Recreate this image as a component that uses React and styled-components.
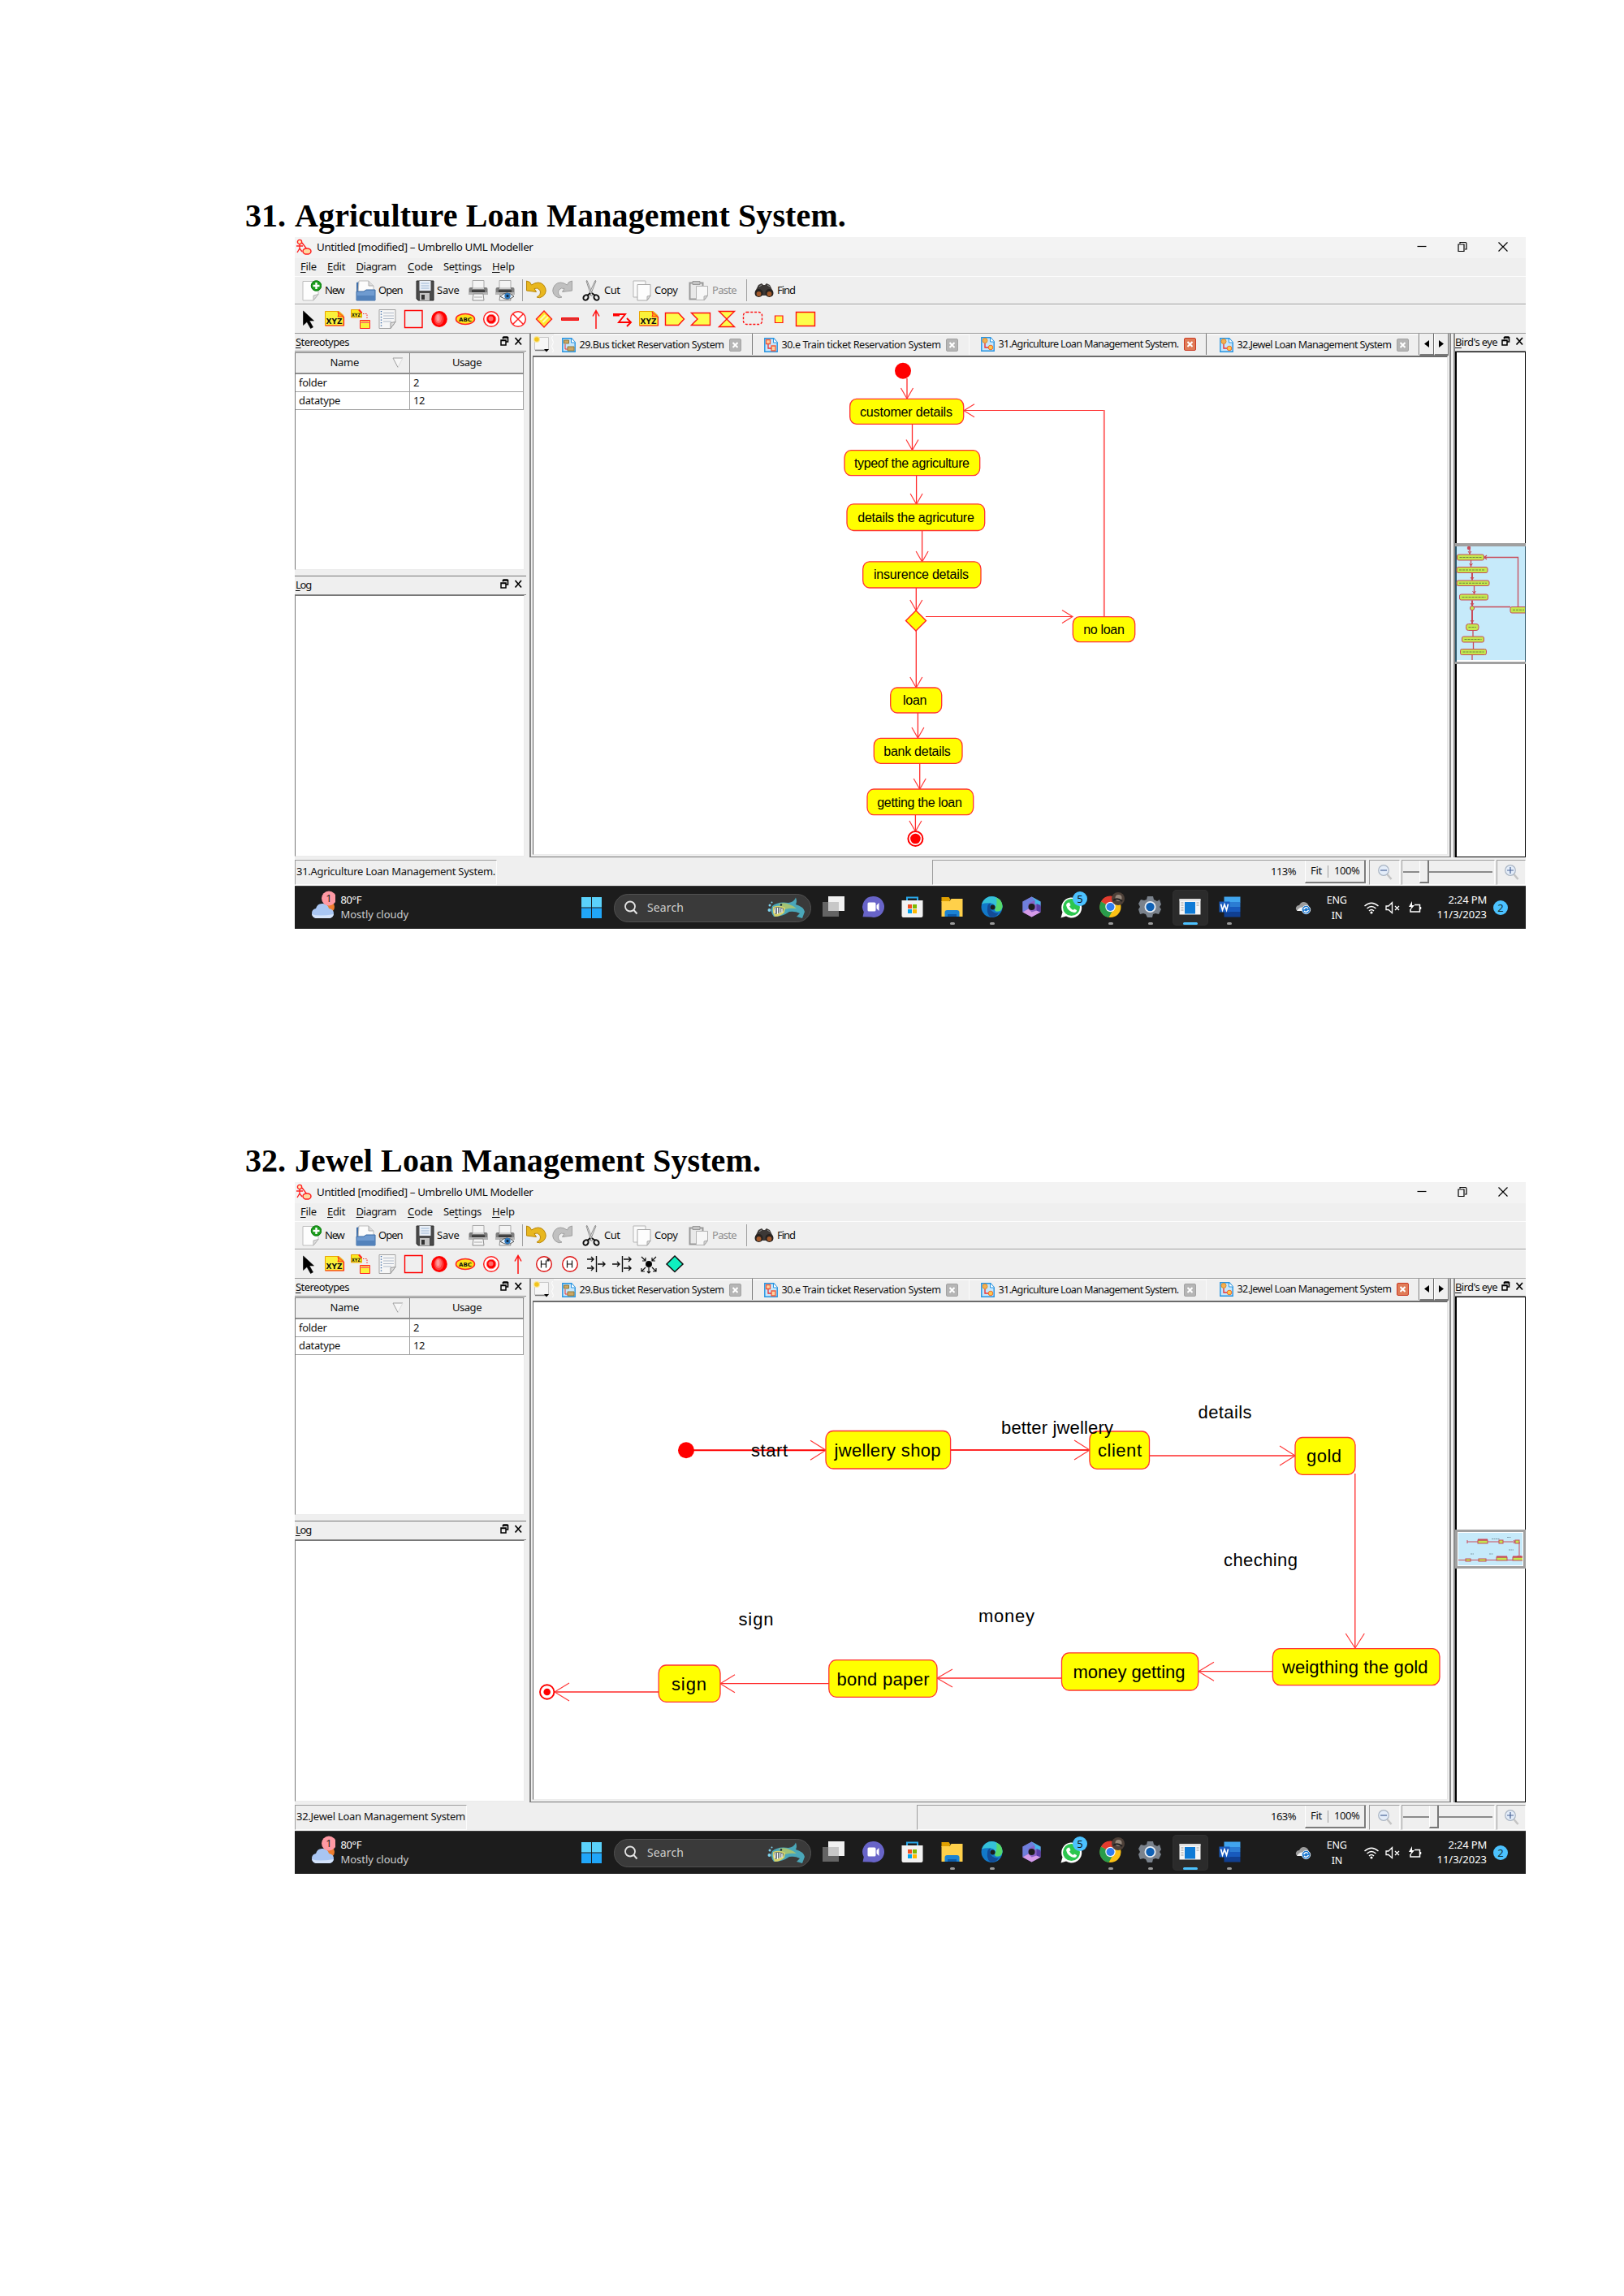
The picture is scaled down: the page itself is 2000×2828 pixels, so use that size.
import React, { useLayoutEffect, useRef, useState } from "react";
import styled, { createGlobalStyle, css } from "styled-components";

const UI = `"Noto Sans", "Open Sans", sans-serif`;
const RED = "#ff0000";

const GlobalStyle = createGlobalStyle`
  html, body { margin: 0; padding: 0; background: #fff; }
  * { box-sizing: border-box; }
  svg { display: block; }
`;

/* ---------- text that is spread or tightened to a given width ---------- */
const FitBox = styled.span`
  display: block;
  flex: none;
  width: ${(p) => p.$w}px;
  margin-left: ${(p) => p.$ml || 0}px;
  white-space: pre;
  font-size: ${(p) => p.$size || 13}px;
  line-height: 1.36;
  color: ${(p) => p.$color || "inherit"};
`;
const FitInner = styled.span`
  display: inline-block;
  u { text-decoration: underline; text-underline-offset: 2px; text-decoration-thickness: 1px; }
`;
function Fit({ w, ml, size, color, children }) {
  const ref = useRef(null);
  const [gap, setGap] = useState(0);
  useLayoutEffect(() => {
    const el = ref.current;
    const natural = el.getBoundingClientRect().width;
    setGap((w - natural) / el.textContent.length);
  }, [w]);
  return (
    <FitBox $w={w} $ml={ml} $size={size} $color={color}>
      <FitInner ref={ref} style={{ letterSpacing: `${gap}px` }}>{children}</FitInner>
    </FitBox>
  );
}

/* ---------- page ---------- */
const Page = styled.main`
  width: 2000px;
  height: 2828px;
  padding: 239px 0 0 302px;
  background: #fff;
  overflow: hidden;
`;
const Section = styled.section`
  height: 1164px;
`;
const Heading = styled.h1`
  margin: 0;
  height: 53px;
  display: flex;
  align-items: flex-start;
  font: bold 40px "Liberation Serif", "Times New Roman", serif;
  color: #000;
`;
const Window = styled.div`
  width: 1516px;
  height: 852px;
  margin-left: 61px;
  display: flex;
  flex-direction: column;
  background: #efefef;
  font-family: ${UI};
  color: #111;
`;
const Bar = styled.div`
  display: flex;
  align-items: center;
  flex: none;
  height: ${(p) => p.$h}px;
  padding-top: ${(p) => p.$pt || 0}px;
  padding-bottom: ${(p) => p.$pb || 0}px;
  background: ${(p) => p.$bg || "#efefef"};
  ${(p) => p.$line && css`border-bottom: 1px solid #9b9b9b; box-shadow: inset 0 1px #fcfcfc;`}
`;
const Slot = styled.span`
  display: flex;
  flex: none;
  justify-content: center;
  margin-left: ${(p) => p.$ml || 0}px;
  width: ${(p) => p.$w}px;
`;
const Separator = styled.span`
  flex: none;
  width: 1px;
  height: 27px;
  margin-left: ${(p) => p.$ml}px;
  background: #a0a0a0;
`;
const Spacer = styled.span`
  flex: 1;
`;
const Rule = styled.div`
  flex: none;
  height: 0;
  box-shadow: 0 -1px #9b9b9b;
`;

const Icon = ({ w, ml, h = 26, vb, children }) => (
  <Slot $w={w} $ml={ml}>
    <svg width={w} height={h} viewBox={vb || `0 0 ${w} ${h}`} fill="none">{children}</svg>
  </Slot>
);

/* ---------- title bar ---------- */
const TitleBar = () => (
  <Bar $h={26} $bg="#f3f3f3" $pb={2}>
    <Icon ml={2} w={19} h={20}>
      <circle cx="4" cy="4" r="2.6" stroke="#f22" strokeWidth="1.4" fill="#fff3c0" />
      <path d="M4 7v5M0 9h8M4 12l-3 5M4 12l3 4M7 5l6 8" stroke="#f22" strokeWidth="1.4" />
      <ellipse cx="13" cy="15.500" rx="5" ry="3.6" stroke="#f22" strokeWidth="1.5" fill="#ffd9a0" />
    </Icon>
    <Fit ml={6} w={266.5} size={13.4}>Untitled [modified] – Umbrello UML Modeller</Fit>
    <Spacer />
    <Icon w={12} h={14}><path d="M.5 6.500h11" stroke="#000" strokeWidth="1.2" /></Icon>
    <Icon ml={38} w={12} h={14}>
      <path d="M1 4h7v8.500H1zM3 3V1.500h6.500q1.500 0 1.500 1.500v7H9" stroke="#000" strokeWidth="1.2" />
    </Icon>
    <Icon ml={38} w={12} h={14}><path d="M.5 1.500l11 11M11.500 1.500l-11 11" stroke="#000" strokeWidth="1.2" /></Icon>
    <Slot $w={22} />
  </Bar>
);

const MenuBar = () => (
  <Bar $h={22}>
    <Fit ml={7} w={20}><u>F</u>ile</Fit>
    <Fit ml={13} w={22}><u>E</u>dit</Fit>
    <Fit ml={13.5} w={49.5}><u>D</u>iagram</Fit>
    <Fit ml={14} w={31}><u>C</u>ode</Fit>
    <Fit ml={13} w={47}>Se<u>t</u>tings</Fit>
    <Fit ml={13} w={28}><u>H</u>elp</Fit>
  </Bar>
);

/* ---------- main toolbar ---------- */
const Printer = () => (
  <g>
    <path d="M5 .5h14V10H5z" fill="#f4f4f4" stroke="#a9a9a9" />
    <path d="M.5 11q0-2 2-2H5v2h14V9h2.500q2 0 2 2v7H.5z" fill="#7d7d7d" />
    <path d="M.5 15h23v3H.5z" fill="#b4b4b4" />
    <path d="M4 12.500h16v2H4z" fill="#262626" />
    <path d="M6 17h12l1 8H5z" fill="#f6f6f6" stroke="#8f8f8f" />
    <path d="M7 21h10" stroke="#aaa" />
  </g>
);
const MainToolbar = () => (
  <Bar $h={35} $line $pt={1}>
    <Icon ml={9} w={24}>
      <path d="M1 1.500h19v16l-6 7.500H1z" fill="#fdfdfd" stroke="#bdbdbd" />
      <path d="M20 17.500l-6 7.500v-6z" fill="#ddd" stroke="#b5b5b5" />
      <circle cx="17.500" cy="7" r="6.300" fill="#1a9c1a" stroke="#0c7a10" />
      <path d="M17.500 3v8M13.500 7h8" stroke="#fff" strokeWidth="2.400" />
    </Icon>
    <Fit ml={4} w={23.5}>New</Fit>
    <Icon ml={14} w={25}>
      <path d="M1 3l4-1v14H1z" fill="#3d6da8" />
      <path d="M4 1h12l6 6v9H3z" fill="#fcfcfc" stroke="#bbb" />
      <path d="M16 1v6h6" fill="#ddd" stroke="#aaa" />
      <path d="M1 14h9l3-2h11v13H1z" fill="#6f9bd0" stroke="#396aa5" />
      <path d="M1 19h23v6H1z" fill="#5382bb" />
    </Icon>
    <Fit ml={3.5} w={29.5}>Open</Fit>
    <Icon ml={16} w={23}>
      <path d="M1 1h21v24H3l-2-2z" fill="#4a4a4a" stroke="#292929" />
      <path d="M4.500 1h14v12h-14z" fill="#eaf0f8" />
      <path d="M6.500 4h10M6.500 7h10M6.500 10h10" stroke="#9cb6d3" />
      <path d="M5 16h12v9H5z" fill="#c4c4c4" />
      <path d="M7 18h4v6H7z" fill="#333" />
    </Icon>
    <Fit ml={3.5} w={27.5}>Save</Fit>
    <Icon ml={11.5} w={24}><Printer /></Icon>
    <Icon ml={8.5} w={25}>
      <Printer />
      <path d="M6 20q8-8 17 0q-8 7-17 0z" fill="#e8f1fa" stroke="#555" />
      <circle cx="15" cy="19.500" r="3.700" fill="#2f78bd" /><circle cx="15" cy="19.500" r="1.500" fill="#123" />
    </Icon>
    <Separator $ml={8} />
    <Icon ml={4} w={25}>
      <path d="M.5 1l4 1.500 2 3.500q9-6 15 0q6 8-1 14q-4 3-7.500 1q6-3 4-8.500q-3-4-7-2l2.500 4L.5 13z" fill="#e8b71f" stroke="#b98507" />
    </Icon>
    <Icon ml={7} w={25}>
      <path d="M24.500 1l-4 1.500-2 3.500q-9-6-15 0q-6 8 1 14q4 3 7.500 1q-6-3-4-8.500q3-4 7-2l-2.500 4 12-1.500z" fill="#c0c0c0" stroke="#9f9f9f" />
    </Icon>
    <Icon ml={12.5} w={22}>
      <path d="M5 1l1-0.500 7 18-2 1zM17 1l-1-0.500L8 18l2 1z" fill="#f4f4f4" stroke="#8c8c8c" />
      <ellipse cx="4.500" cy="21.500" rx="2.800" ry="3.400" transform="rotate(35 4.500 21.500)" stroke="#111" strokeWidth="2" />
      <ellipse cx="17.500" cy="21.500" rx="2.800" ry="3.400" transform="rotate(-35 17.500 21.500)" stroke="#111" strokeWidth="2" />
      <path d="M6 19l4-3M16 19l-4-3" stroke="#111" strokeWidth="1.600" />
    </Icon>
    <Fit ml={5} w={19.5}>Cut</Fit>
    <Icon ml={15} w={23}>
      <path d="M1 1h15v20H1z" fill="#fafafa" stroke="#b5b5b5" />
      <path d="M6 5.500h16v14l-4 5.500H6z" fill="#fdfdfd" stroke="#a9a9a9" />
      <path d="M22 19l-4 6v-5z" fill="#ddd" stroke="#aaa" />
    </Icon>
    <Fit ml={4.5} w={28.5}>Copy</Fit>
    <Icon ml={13.5} w={24}>
      <path d="M1.500 3.500h16v20h-16z" fill="#e9e9e9" stroke="#999" strokeWidth="2" />
      <path d="M5 1.500h9v4H5z" fill="#c4c4c4" stroke="#999" />
      <path d="M9.500 7.500h14v12l-4 5h-10z" fill="#f7f7f7" stroke="#b3b3b3" />
      <path d="M23 19l-4 6v-5z" fill="#ddd" stroke="#aaa" />
    </Icon>
    <Fit ml={5} w={30} color="#8f8f8f">Paste</Fit>
    <Separator $ml={12} />
    <Icon ml={9} w={24}>
      <path d="M5 6l4-2 2 2h2l2-2 4 2 4 8v5H1v-5z" fill="#3c3836" />
      <circle cx="5.500" cy="16" r="5" fill="#262220" /><circle cx="18.500" cy="16" r="5" fill="#262220" />
      <circle cx="5.500" cy="17" r="2.900" fill="#a35a2c" /><circle cx="18.500" cy="17" r="2.900" fill="#a35a2c" />
      <path d="M6 8l3-2M16 6l3 2" stroke="#999" />
    </Icon>
    <Fit ml={4} w={22}>Find</Fit>
  </Bar>
);

/* ---------- diagram tools ---------- */
const ToolSlot = styled.span`
  flex: none;
  width: 32.2px;
  display: flex;
  justify-content: center;
`;
const ToolRow = styled.div`
  display: flex;
  margin-left: 1px;
`;
const svgText = { fontFamily: '"DejaVu Sans", sans-serif', fontWeight: "bold", fill: "#111" };
const Xyz = () => (
  <g>
    <path d="M1.500 3.500h17l5.500 5v12.500H1.500z" fill="#fbf13a" stroke="#e9a300" />
    <path d="M1.500 21h23V10" stroke="#f22" strokeWidth="1.200" />
    <path d="M17 4l7 6h-7q2-3 0-6z" fill="#ffb000" stroke="#f22" />
    <text x="2.500" y="18.500" fontSize="9" textLength="20" lengthAdjust="spacingAndGlyphs" {...svgText}>XYZ</text>
  </g>
);
const tools = {
  select: <path d="M6.500 3v17.500l4.500-4 4.500 8 3-1.500-4.500-8h5.500z" fill="#000" stroke="#000" strokeWidth=".6" />,
  xyz: <Xyz />,
  anchor: (
    <g>
      <path d="M1.500 1.500h10l3 3v6.500h-13z" fill="#fbe81e" stroke="#e9a300" />
      <path d="M11 1.500l3.500 4" stroke="#f22" strokeWidth="2" />
      <text x="2" y="9.500" fontSize="6" textLength="11" lengthAdjust="spacingAndGlyphs" {...svgText}>XYZ</text>
      <path d="M16 6.500h5v7" stroke="#f22" strokeDasharray="1.500 1.500" />
      <path d="M12.500 14.500h12v10h-12z" fill="#fbf13a" stroke="#f22" />
      <path d="M12.500 17.500h12M14 16h9" stroke="#f66" />
    </g>
  ),
  note: (
    <g>
      <path d="M3 1.500h20v15l-6 8H3z" fill="#f6f6f6" stroke="#a2a2a2" />
      <path d="M8 5.500h13M8 9h13M8 12.500h13M8 16h10" stroke="#b0bac8" />
      <path d="M5.500 3v20" stroke="#3465a4" strokeWidth="1.400" strokeDasharray="1.300 2.200" />
      <path d="M23 16.500l-6 8v-7z" fill="#ddd" stroke="#999" />
    </g>
  ),
  rect: <path d="M2.500 2.500h21.500v21H2.500z" stroke={RED} strokeWidth="1.400" />,
  initial: (
    <g>
      <ellipse cx="13" cy="13" rx="9.800" ry="10" fill="#f00" />
      <ellipse cx="12.500" cy="13" rx="6" ry="7.500" fill="#ff3a3a" />
      <ellipse cx="12" cy="12" rx="4" ry="6" fill="#ff6e6e" />
      <ellipse cx="11.500" cy="11.500" rx="2" ry="4" fill="#ff9a9a" />
    </g>
  ),
  abc: (
    <g>
      <ellipse cx="13" cy="13" rx="11.500" ry="6.500" fill="#ffe11a" stroke="#f22" strokeWidth="1.500" />
      <text x="5" y="15.500" fontSize="6.500" textLength="16" lengthAdjust="spacingAndGlyphs" {...svgText}>ABC</text>
    </g>
  ),
  final: (
    <g>
      <circle cx="13" cy="13" r="9.300" stroke="#f22" strokeWidth="1.500" fill="#fff" />
      <circle cx="13" cy="13" r="5.800" fill="#f00" stroke="#f77" /><circle cx="12.500" cy="12.500" r="3" fill="#ff6a6a" />
    </g>
  ),
  cross: (
    <g stroke="#f22" strokeWidth="1.500">
      <circle cx="13" cy="13" r="9.300" fill="#fff" /><path d="M6.500 6.500l13 13M19.500 6.500l-13 13" />
    </g>
  ),
  decision: (
    <g>
      <path d="M13 3l9.500 10L13 23 3.500 13z" fill="#ffe92e" stroke="#f22" strokeWidth="1.500" />
      <path d="M8.500 14l6-6M11.500 17l6.500-6.500" stroke="#fff9b0" strokeWidth="2.200" />
    </g>
  ),
  bar: <path d="M2.500 11.500h21v3h-21z" fill="#d33" stroke="#f00" />,
  up: <path d="M13 25V3M9 9.500L13 2.500l4 7" stroke="#f11" strokeWidth="1.500" />,
  zigzag: <path d="M2 7h15L9 17h15M19 12l5 5-5 5M2 8.500h8" stroke={RED} strokeWidth="1.900" />,
  pentagon: <path d="M1.500 5.500h16L24.500 13l-7 7.500h-16z" fill="#fdfd4a" stroke="#f11" strokeWidth="1.400" />,
  receive: <path d="M1.500 5.500h23v15h-23L9 13z" fill="#fdfd4a" stroke="#f11" strokeWidth="1.400" />,
  hourglass: <path d="M3.500 3.500h19L3.500 22.500h19z" fill="#fdfd4a" stroke="#f11" strokeWidth="1.400" />,
  region: <rect x="1.500" y="4.500" width="23" height="15" rx="4" stroke="#f11" strokeWidth="1.400" strokeDasharray="3 1.800" />,
  pin: <path d="M8.500 9h9.500v8.500H8.500z" fill="#fdfd4a" stroke="#f11" strokeWidth="1.200" />,
  object: <path d="M1.500 4.500h23v17h-23z" fill="#fdfd4a" stroke="#f11" strokeWidth="1.400" />,
  history: (star) => (
    <g>
      <circle cx="13" cy="13" r="9.300" stroke="#d11" strokeWidth="1.400" fill="#fff" />
      <path d="M9.500 8.500v9M15.500 8.500v9M9.500 13h6" stroke="#111" strokeWidth="1.200" />
      {star && <path d="M18 6v4M16.300 7l3.500 2M19.800 7l-3.500 2" stroke="#111" />}
    </g>
  ),
  join: <path d="M13.500 3v20M2 7h8M7 4l3 3-3 3M2 18h8M7 15l3 3-3 3M15 13h9M21 10l3 3-3 3" stroke="#111" strokeWidth="1.400" />,
  fork: <path d="M13.500 3v20M1 13h9M7 10l3 3-3 3M15 7h9M21 4l3 3-3 3M15 18h9M21 15l3 3-3 3" stroke="#111" strokeWidth="1.400" />,
  junction: (
    <g stroke="#111" strokeWidth="1.200">
      <circle cx="13" cy="13" r="3.400" fill="#000" />
      <path d="M4 4l5 5M9 5v4H5M22 4l-5 5M17 5v4h4M13 17v7M11 22l2 2 2-2M9 17l-5 5M4 18v4h4M17 17l5 5M22 18v4h-4" />
    </g>
  ),
  choice: <path d="M13 3l10 10-10 9.500L3 13z" fill="#0ff0c0" stroke="#111" strokeWidth="1.500" />,
};
const DiagramTools = ({ names }) => (
  <Bar $h={36} $line>
    <ToolRow>
      {names.map((n, i) => (
        <ToolSlot key={i}>
          <svg width="26" height="26" viewBox="0 0 26 26" fill="none">
            {n === "deep" ? tools.history(true) : n === "history" ? tools.history(false) : tools[n]}
          </svg>
        </ToolSlot>
      ))}
    </ToolRow>
  </Bar>
);

/* ---------- docks ---------- */
const Body = styled.div`
  flex: none;
  height: 645px;
  display: flex;
`;
const LeftDock = styled.div`
  width: 285px;
  flex: none;
  display: flex;
  flex-direction: column;
`;
const DockTitle = styled.div`
  display: flex;
  align-items: center;
  flex: none;
  height: ${(p) => p.$h}px;
  padding: ${(p) => p.$pad || "0 5px 0 1px"};
  border-bottom: 1px solid #8c8c8c;
  border-top: ${(p) => (p.$top ? "1px solid #777" : "0")};
`;
const DockButtons = styled.span`
  display: flex;
  padding-bottom: 4px;
`;
const SunkenBox = styled.div`
  flex: none;
  width: 283px;
  height: ${(p) => p.$h}px;
  margin-top: ${(p) => p.$mt || 0}px;
  background: #fff;
  border-left: 1px solid #777;
  border-top: 1px solid #777;
  border-right: 1px solid #ececec;
  border-bottom: 1px solid #ececec;
`;
const Table = styled.div`
  display: grid;
  grid-template-columns: 141px 140px;
  grid-template-rows: 26px 22px 22px;
  width: 281px;
`;
const HeadCell = styled.div`
  display: flex;
  align-items: center;
  background: #efefef;
  border-right: 1px solid #8e8e8e;
  border-bottom: 2px solid #8e8e8e;
`;
const Cell = styled.div`
  display: flex;
  align-items: center;
  padding-left: 4px;
  border-right: 1px solid #a2a2a2;
  border-bottom: 1px solid #a2a2a2;
`;
const DockIcons = () => (
  <DockButtons>
    <Icon w={27} h={12}>
      <path d="M3.500 1h6M3.500 1v2.500M9.500 1v6H7M3 2h7" stroke="#000" strokeWidth="1.600" />
      <path d="M1 5h6v6H1zM1 5.500h6" stroke="#000" strokeWidth="1.500" />
      <path d="M18.500 2l7.500 8.500M26 2l-7.500 8.500" stroke="#000" strokeWidth="1.700" />
    </Icon>
  </DockButtons>
);
const Docks = () => (
  <LeftDock>
    <DockTitle $h={22}>
      <Fit w={66}><u>S</u>tereotypes</Fit>
      <Spacer />
      <DockIcons />
    </DockTitle>
    <SunkenBox $h={268} $mt={1}>
      <Table>
        <HeadCell>
          <Fit ml={42.5} w={35.5}>Name</Fit>
          <Icon ml={41} w={14} h={14}>
            <path d="M1 1h12L7 12.500z" fill="#f7f7f7" />
            <path d="M13 1H1l6 11.500" stroke="#9f9f9f" />
            <path d="M13 1L7 12.500" stroke="#dcdcdc" />
          </Icon>
        </HeadCell>
        <HeadCell><Fit ml={52} w={36}>Usage</Fit></HeadCell>
        <Cell><Fit w={34.5}>folder</Fit></Cell>
        <Cell><Fit w={8}>2</Fit></Cell>
        <Cell><Fit w={51}>datatype</Fit></Cell>
        <Cell><Fit w={14}>12</Fit></Cell>
      </Table>
    </SunkenBox>
    <Slot $w={1}><svg width="1" height="7" /></Slot>
    <DockTitle $h={24} $top>
      <Fit w={19}><u>L</u>og</Fit>
      <Spacer />
      <DockIcons />
    </DockTitle>
    <SunkenBox $h={322} />
  </LeftDock>
);

/* ---------- tabs and canvas ---------- */
const Center = styled.div`
  width: 1135px;
  flex: none;
  margin-left: 4px;
  display: flex;
  flex-direction: column;
  border-left: 2px solid #858585;
  border-right: 2px solid #8a8a8a;
  border-bottom: 1px solid #777;
`;
const TabRow = styled.div`
  display: flex;
  height: 27px;
  flex: none;
  padding-left: 3px;
`;
const Tab = styled.div`
  display: flex;
  align-items: center;
  flex: none;
  width: ${(p) => p.$w}px;
  padding-left: ${(p) => p.$pl}px;
  padding-top: ${(p) => (p.$active ? 0 : 2)}px;
  height: 26px;
  border-right: ${(p) => (p.$edge ? "1px solid #777" : "1px solid #fafafa")};
  box-shadow: inset 0 ${(p) => (p.$active ? 1 : 2)}px #f8f8f8;
`;
const CloseBox = styled.span`
  flex: none;
  width: 15px;
  height: 16px;
  margin-left: 6px;
  display: flex;
  align-items: center;
  justify-content: center;
  border-radius: 2px;
  border: 1px solid ${(p) => (p.$on ? "#cb3a24" : "#a2a2a2")};
  background: ${(p) => (p.$on ? "#e07c58" : "#b5b5b5")};
`;
const Arrow = styled.span`
  flex: none;
  width: 18px;
  height: 27px;
  display: flex;
  align-items: center;
  justify-content: center;
  border-left: 1px solid #fff;
  border-right: 1px solid #6b6b6b;
  border-bottom: 2px solid #7a7a7a;
`;
const CanvasFrame = styled.div`
  flex: 1;
  border-top: 2px solid #6b6b6b;
  border-left: 1px solid #606060;
  border-right: 1px solid #e6e6e6;
  margin: 0 2px 2px 2px;
  background: #fff;
  border-bottom: 1px solid #ececec;
`;
const TabIcon = ({ kind }) => (
  <Icon w={17} h={18}>
    <path d="M.8.8h11l4.400 5v11.400H.8z" fill="#c6e6fb" stroke="#2492e0" strokeWidth="1.400" />
    <path d="M11.500 1v5h5" fill="#fff" stroke="#2492e0" />
    {kind === "bus" ? (
      <g><path d="M2.500 3h6v4h-6zM7 11h8v5H7z" fill="#cda560" stroke="#8b7a43" /><path d="M4 8v6h3" stroke="#e33" /></g>
    ) : kind === "train" ? (
      <g><path d="M2.500 2.500h5v5h-5zM9 10h5v6H9z" fill="#ffd2a0" stroke="#ef5a3c" strokeWidth="1.300" /><path d="M5 8v5h4" stroke="#e33" strokeWidth="1.300" /></g>
    ) : (
      <g><circle cx="5" cy="4.500" r="3" fill="#f4b050" stroke="#d98a2a" /><circle cx="12" cy="13" r="2.800" fill="#ffc84a" stroke="#ee6a2c" /><path d="M5 8v5h4" stroke="#e33" strokeWidth="1.400" /></g>
    )}
  </Icon>
);
const tabs = [
  { label: "29.Bus ticket Reservation System", w: 245, pl: 10, tw: 178, kind: "bus", edge: true },
  { label: "30.e Train ticket Reservation System", w: 267, pl: 14, tw: 196, kind: "train" },
  { label: "31.Agriculture Loan Management System.", w: 292, pl: 14, tw: 222, kind: "flow", edge: true },
  { label: "32.Jewel Loan Management System", w: 262, pl: 16, tw: 190, kind: "flow", edge: true },
];
const Tabs = ({ active }) => (
  <TabRow>
    <Icon w={25} h={26}>
      <path d="M1.500 4.500h17V20h-17z" fill="#f6f6f6" stroke="#c6c6c6" />
      <path d="M2 20.500h14" stroke="#777" strokeWidth="1.400" />
      <circle cx="4" cy="7" r="4" fill="#f9e79a" /><circle cx="4" cy="7" r="2.800" fill="#f2c41c" />
      <path d="M13 19h6l-3 3.500z" fill="#000" />
      <path d="M23.500 3q-2 2.500 0 5t0 5 0 5 0 5" stroke="#fff" />
    </Icon>
    {tabs.map((t, i) => (
      <Tab key={t.label} $w={t.w} $pl={t.pl} $active={i === active} $edge={t.edge && !(active === 3 && i === 2)}>
        <TabIcon kind={t.kind} />
        <Fit ml={4.5} w={t.tw} size={12.6}>{t.label}</Fit>
        <CloseBox $on={i === active}>
          <svg width="7" height="8" viewBox="0 0 7 8"><path d="M.5 1l6 6M6.500 1l-6 6" stroke="#fff" strokeWidth="2" /></svg>
        </CloseBox>
      </Tab>
    ))}
    <Arrow><svg width="6" height="9"><path d="M6 0v9L0 4.500z" fill="#000" /></svg></Arrow>
    <Arrow><svg width="6" height="9"><path d="M0 0v9l6-4.500z" fill="#000" /></svg></Arrow>
  </TabRow>
);

/* ---------- UML drawing parts ---------- */
const Label = ({ x, w, y, fs, children }) => (
  <text x={x} y={y} fontSize={fs} textLength={w} fontFamily='"Liberation Sans", Arial, sans-serif' fill="#000">{children}</text>
);
const Box = ({ x, y, x2, y2, r, label, tx, tw, by, fs }) => (
  <g>
    <rect x={x} y={y} width={x2 - x} height={y2 - y} rx={r} ry={r + 1} fill="#ffff00" stroke="#f33" strokeWidth="1.300" />
    <Label x={tx} w={tw} y={by} fs={fs}>{label}</Label>
  </g>
);
const Line = ({ d, w = 1.3 }) => <path d={d} stroke="#ff2a2a" strokeWidth={w} fill="none" />;
const Head = ({ x, y, dir, l, h }) => {
  const s = { down: [-h, -l, h, -l], left: [l, -h, l, h], right: [-l, -h, -l, h] }[dir];
  return <path d={`M${x + s[0]} ${y + s[1]}L${x} ${y}L${x + s[2]} ${y + s[3]}`} stroke="#ff3a3a" strokeWidth="1.200" fill="none" />;
};

const loanSteps = [
  [1046.7, 491.4, 1186.7, 522.4, "customer details", 1059, 114, 513],
  [1040, 554.7, 1206.7, 585.7, "typeof the agriculture", 1052, 142, 575.7],
  [1043, 620.8, 1212.7, 653.5, "details the agricuture", 1056.3, 143.5, 642.7],
  [1062.7, 691.8, 1208, 724, "insurence details", 1076, 117, 713.2],
  [1321.3, 759.6, 1397.7, 790.6, "no loan", 1334.3, 50.5, 780.7],
  [1096.7, 847, 1159.7, 878, "loan", 1112, 29.5, 867.5],
  [1076.3, 909.4, 1185, 940.4, "bank details", 1088.3, 82.5, 930.7],
  [1068, 972, 1198.7, 1003.7, "getting the loan", 1080.3, 104.5, 993.7],
];
const loanFlows = [
  [1117, 466, 491], [1123.5, 522, 554.5], [1128.6, 586, 621], [1135.6, 653, 692],
  [1128.3, 724, 752], [1128.3, 777, 847], [1130.4, 878, 909], [1132.7, 940, 972], [1127.4, 1004, 1024],
];
const LoanDiagram = () => (
  <svg width="1123" height="612" viewBox="657 440 1123 612">
    <circle cx="1112" cy="456.700" r="10" fill={RED} />
    {loanFlows.map(([x, a, b]) => (
      <g key={a}><Line d={`M${x} ${a}V${b}`} /><Head x={x} y={b} dir="down" l={13} h={7.5} /></g>
    ))}
    <Line d="M1140 759.500H1321" w={1} /><Head x={1321} y={759.5} dir="right" l={13} h={8} />
    <Line d="M1360 505.500H1188" w={1} />
    <path d="M1359.800 505V760" stroke="#ff6a6a" strokeWidth="2" />
    <Head x={1187} y={505.7} dir="left" l={13} h={8} />
    <path d="M1128 752l12.500 12.500-12.500 12.500-12.500-12.500z" fill="#ff0" stroke="#f22" strokeWidth="1.400" />
    {loanSteps.map((b) => (
      <Box key={b[4]} x={b[0]} y={b[1]} x2={b[2]} y2={b[3]} r={8} label={b[4]} tx={b[5]} tw={b[6]} by={b[7]} fs={16} />
    ))}
    <circle cx="1127.400" cy="1033" r="9" fill="#fff" stroke={RED} strokeWidth="2" />
    <circle cx="1127.400" cy="1033" r="6.300" fill={RED} />
  </svg>
);

const jewelSteps = [
  [1017, 1762.5, 1170.6, 1809, "jwellery shop", 1027.5, 131, 1793.7],
  [1341.9, 1763, 1415.5, 1809.4, "client", 1352, 54, 1793.7],
  [1595, 1770.5, 1669, 1816.4, "gold", 1609, 43, 1800.7],
  [1567.4, 2030.6, 1773, 2075.7, "weigthing the gold", 1579, 179.5, 2061],
  [1307.5, 2035.8, 1475.7, 2082, "money getting", 1321.5, 138, 2066.5],
  [1020.8, 2044.7, 1154, 2090.3, "bond paper", 1030.5, 114, 2075.5],
  [811.2, 2051, 887, 2096.3, "sign", 827, 43, 2081.5],
];
const JewelDiagram = () => (
  <svg width="1123" height="612" viewBox="657 1604 1123 612">
    <circle cx="845" cy="1786.300" r="10" fill={RED} />
    <path d="M854 1786.200H1017" stroke={RED} strokeWidth="2" /><Head x={1017} y={1786.2} dir="right" l={19} h={12} />
    <Line d="M1171 1786H1342" w={1.9} /><Head x={1342} y={1786} dir="right" l={19} h={12} />
    <Line d="M1416 1793H1595" w={1.5} /><Head x={1595} y={1793} dir="right" l={19} h={12} />
    <Line d="M1668.800 1815V2030" /><Head x={1668.8} y={2030} dir="down" l={18} h={11.5} />
    <Line d="M1567 2058.700H1477" /><Head x={1476} y={2058.7} dir="left" l={19} h={11.5} />
    <Line d="M1307 2067H1155" /><Head x={1154} y={2067} dir="left" l={19} h={11} />
    <Line d="M1021 2073.700H888" /><Head x={887} y={2073.7} dir="left" l={18} h={11} />
    <Line d="M811 2084H683" /><Head x={683} y={2084} dir="left" l={18} h={11} />
    {jewelSteps.map((b) => (
      <Box key={b[4]} x={b[0]} y={b[1]} x2={b[2]} y2={b[3]} r={9} label={b[4]} tx={b[5]} tw={b[6]} by={b[7]} fs={22} />
    ))}
    <Label x={925} w={45} y={1793.7} fs={22}>start</Label>
    <Label x={1233} w={138} y={1766} fs={22}>better jwellery</Label>
    <Label x={1475.5} w={66} y={1747} fs={22}>details</Label>
    <Label x={1507} w={91} y={1929} fs={22}>cheching</Label>
    <Label x={1205} w={69} y={1998} fs={22}>money</Label>
    <Label x={909.5} w={43} y={2002} fs={22}>sign</Label>
    <circle cx="673.700" cy="2084" r="8.700" fill="#fff" stroke={RED} strokeWidth="1.900" />
    <circle cx="673.700" cy="2084" r="4.300" fill={RED} />
  </svg>
);

/* ---------- bird's eye ---------- */
const BirdDock = styled.div`
  flex: 1;
  min-width: 0;
  margin-left: 3px;
  border-left: 2px solid #8b8b8b;
  display: flex;
  flex-direction: column;
`;
const BirdBox = styled.div`
  flex: none;
  height: 623px;
  background: #fff;
  border: 1px solid #000;
  border-left-width: 2px;
  padding-top: ${(p) => p.$top}px;
`;
const BirdView = styled.div`
  background: #c6eafa;
  margin: 0 -1px 0 -2px;
  height: ${(p) => p.$h}px;
  ${(p) => p.$boxed
    ? css`border: 3px solid #a0a0a0; box-shadow: inset 0 0 0 1px #fff;`
    : css`border-top: 4px solid #a0a0a0; border-bottom: 3px solid #a0a0a0; box-shadow: inset 2px 0 #2f5669, inset -1px 0 #2f5669, inset 0 -2px #fff;`}
`;
const mini = { stroke: "#c84b5a", fill: "#c3e84f" };
const MiniBox = ({ x, y, w, h, r = 2 }) => (
  <g><rect x={x} y={y} width={w} height={h} rx={r} {...mini} /><path d={`M${x + 3} ${y + h / 2}h${w - 6}`} stroke="#6f8440" strokeDasharray="3 1" /></g>
);
const LoanMini = () => (
  <svg width="86" height="140" viewBox="-2 0 86 140" fill="none">
    <path d="M16 0v10M17.500 17v8M19 32v10M21.500 49v10M19 66v29M20 104v7M20.500 118v8M19 134v6M34 13.500h41.500V75M20 74.500h46M37 11l-3 2.500 3 2.500" stroke="#c84b5a" strokeWidth="1.300" />
    <path d="M19 67v8M19 78v17M19 32v9" stroke="#c84b5a" strokeWidth="2" />
    <circle cx="15" cy="2" r="2.200" fill="#c84b5a" />
    <path d="M14 6l2 3 2-3M15.500 21l2 3 2-3M17 38l2 3 2-3M19.500 55l2 3 2-3M17 91l2 3 2-3M17 70l2 3 2-3" stroke="#c84b5a" />
    <MiniBox x={0.5} y={10} w={33} h={7} /><MiniBox x={0} y={25.5} w={38} h={7} />
    <MiniBox x={0} y={42} w={40} h={6.5} /><MiniBox x={3.5} y={59} w={35} h={7} />
    <MiniBox x={66} y={74.5} w={20} h={7.5} /><MiniBox x={11.5} y={95.5} w={15.5} h={8} r={3} />
    <MiniBox x={6.5} y={111} w={27} h={7} /><MiniBox x={4.5} y={126.5} w={32} h={7} />
    <circle cx="19" cy="76" r="2.600" {...mini} />
  </svg>
);
const JewelMini = () => (
  <svg width="80" height="41" viewBox="-1 -1 80 41" fill="none">
    <path d="M11 11h64v20M0 33.500h80M11 9v4M73 28l2 3 2-3M68 9l2 2-2 2" stroke="#c84b5a" />
    <rect x="24" y="9" width="12" height="4" {...mini} /><rect x="50" y="9" width="5" height="4" {...mini} />
    <rect x="70" y="9" width="5" height="4" {...mini} /><rect x="9" y="32" width="6" height="3" {...mini} />
    <rect x="25" y="32" width="9" height="3" {...mini} /><rect x="47" y="30" width="13" height="4" {...mini} />
    <rect x="67" y="30" width="12.500" height="4" {...mini} />
    <path d="M24 8.500h12M47 29.500h13M67 29.500h12" stroke="#c84b5a" strokeWidth="2" />
    <path d="M41 7.500h10M60 5.500h5M62 21h6M15 26h4M38 26h5" stroke="#7e9aa8" strokeDasharray="2 .5" />
  </svg>
);

/* ---------- status bar ---------- */
const StatusBox = styled.div`
  flex: none;
  display: flex;
  align-items: center;
  width: ${(p) => p.$w}px;
  height: 31px;
  margin-left: ${(p) => p.$ml || 0}px;
  border-top: 1px solid #9d9d9d;
  border-left: 1px solid #9d9d9d;
  border-right: 1px solid #fcfcfc;
  border-bottom: 1px solid #fcfcfc;
`;
const Raised = styled.div`
  flex: none;
  width: 75px;
  height: 28px;
  display: flex;
  align-items: center;
  border-left: 1px solid #fff;
  border-right: 2px solid #7c7c7c;
  border-bottom: 2px solid #7c7c7c;
  margin-left: 11px;
`;
const Divider = styled.span`
  width: 1px;
  height: 15px;
  margin-left: 7px;
  background: #a0a0a0;
`;
const SliderTrack = styled.div`
  display: flex;
  align-items: center;
  width: 110px;
  height: 28px;
  margin-left: 1px;
  background: linear-gradient(#8b8b8b, #8b8b8b) 0 13px / 100% 2px no-repeat;
`;
const SliderThumb = styled.span`
  width: 12px;
  height: 28px;
  margin-left: ${(p) => p.$at}px;
  background: #efefef;
  border-left: 1px solid #fff;
  border-right: 2px solid #777;
  border-bottom: 2px solid #777;
`;
const Lens = ({ plus, ml }) => (
  <Icon ml={ml} w={18} h={20}>
    <path d="M11.500 13l5 6" stroke="#c4c4c4" strokeWidth="2.500" />
    <circle cx="7" cy="8" r="6.300" fill="#e4edf9" stroke="#a9b4c2" strokeWidth="1.200" />
    <path d={plus ? "M3 8h8M7 4v8" : "M3 8h8"} stroke="#4a6496" strokeWidth="1.200" />
  </Icon>
);
const StatusBar = ({ message, mw, tw, px, zoom, at }) => (
  <Bar $h={35} $pt={1}>
    <StatusBox $w={mw}><Fit ml={1} w={tw}>{message}</Fit></StatusBox>
    <Spacer />
    <StatusBox $w={1683 - px}>
      <Spacer />
      <Fit w={31}>{zoom}</Fit>
      <Raised>
        <Fit ml={6} w={14}>Fit</Fit>
        <Divider />
        <Fit ml={7} w={31.5}>100%</Fit>
      </Raised>
    </StatusBox>
    <StatusBox $w={38} $ml={3}><Lens ml={10} /></StatusBox>
    <StatusBox $w={115} $ml={2}><SliderTrack><SliderThumb $at={at} /></SliderTrack></StatusBox>
    <StatusBox $w={36} $ml={2}><Lens ml={9} plus /></StatusBox>
  </Bar>
);

/* ---------- taskbar ---------- */
const TaskbarRoot = styled.div`
  flex: none;
  height: 53px;
  display: flex;
  align-items: center;
  background: #1c1c1c;
  border-top: 1px solid #3a3a3a;
  color: #fff;
`;
const Stack = styled.div`
  flex: none;
  display: flex;
  flex-direction: column;
  align-items: ${(p) => p.$align || "flex-start"};
  margin-left: ${(p) => p.$ml}px;
  height: 36px;
  justify-content: space-between;
`;
const SearchPill = styled.div`
  flex: none;
  width: 243px;
  height: 35px;
  margin-left: 15px;
  display: flex;
  align-items: center;
  border-radius: 18px;
  border: 1px solid #515151;
  background: #3a3a3a;
`;
const TaskApps = styled.div`
  display: flex;
  flex: none;
  margin-left: 3px;
`;
const AppSlot = styled.div`
  width: 48.8px;
  height: 44px;
  display: flex;
  flex-direction: column;
  align-items: center;
`;
const AppTile = styled.div`
  display: flex;
  flex-direction: column;
  align-items: center;
  width: 44px;
  height: 44px;
  padding-top: 5px;
  border-radius: 5px;
  background: ${(p) => (p.$open ? "#2b2b2b" : "transparent")};
  box-shadow: ${(p) => (p.$open ? "inset 0 0 0 1px #303030" : "none")};
`;
const Dot = styled.span`
  width: ${(p) => (p.$open ? 18 : 6)}px;
  height: 3px;
  margin-top: 3px;
  border-radius: 2px;
  background: ${(p) => (p.$open ? "#4cc2ff" : "#9a9a9a")};
`;
const apps = [
  { icon: <g><path d="M10 3h20v18H10z" fill="#f1f1f1" /><path d="M3 10h20v18H3z" fill="#777" opacity=".8" /><path d="M10 10h13v11H10z" fill="#c7c7c7" /></g> },
  { icon: <g><path d="M16.500 3a13 13 0 1 1-3 25.500l-10-.2 1.300-6A13 13 0 0 1 16.500 3z" fill="#6864c8" /><rect x="9.500" y="10.500" width="10" height="11" rx="1.500" fill="#fff" /><path d="M20.500 14l3-3v10l-3-3z" fill="#fff" /></g> },
  { icon: <g><path d="M10 9V4.500h13V9" stroke="#29a8ea" strokeWidth="2" /><path d="M3.500 8h26v19q0 2-2 2h-22q-2 0-2-2z" fill="#f2f2f2" /><path d="M11 13h5v5h-5z" fill="#f25022" /><path d="M17 13h5v5h-5z" fill="#7fba00" /><path d="M11 19h5v5h-5z" fill="#00a4ef" /><path d="M17 19h5v5h-5z" fill="#ffb900" /></g> },
  { dot: 1, icon: <g><path d="M3.500 4h9l2 3-2 3h-9z" fill="#e0a000" /><path d="M3.500 9h10l2-3h14v22h-26z" fill="#ffd04a" /><path d="M7.500 28v-5q0-3 3-3h12q3 0 3 3v5z" fill="#1b83d3" /><path d="M11 25h11v3H11z" fill="#0b5cab" /></g> },
  { dot: 1, icon: <g><circle cx="16.500" cy="16" r="13" fill="#1279c9" /><path d="M4 12.500A13 13 0 0 1 29.500 16q-.5 6-7 5.500-3-.5-2-3 1-6-5-7-6-1-11.500 1z" fill="#35c1d8" /><path d="M22 4.500Q30 8 29.500 16q-1 6-7 5.500-3-.5-2-3 3-7 1.500-14z" fill="#57d96b" /><path d="M11 17q0-5 4-5.500-2 4 0 8 4 5 10 4-4 6-10 5-5-3-4-11.500z" fill="#134b96" /><circle cx="17.500" cy="16.500" r="3" fill="#1c1c1c" /></g> },
  { icon: <g><path d="M16.500 3.500l11 6v13l-11 6-11-6v-13z" fill="#8a62c5" /><path d="M16.500 3.500l-11 6v13l7-4V12l8-4z" fill="#6f7fdc" /><path d="M16.500 3.500l11 6v6l-7-3V8z" fill="#47b7e8" /><path d="M5.500 22.500l11 6 11-6-5-2-6 2-4-4z" fill="#d59be8" /><path d="M27.500 14v8.500l-5-2V12z" fill="#5a3fa8" /><circle cx="16.500" cy="16" r="4" fill="#1c1c1c" /></g> },
  { badge: "5", icon: <g><path d="M3.500 29.500l2-7A12.500 12.500 0 1 1 10 27.500z" fill="#fff" /><circle cx="16.500" cy="16.500" r="10.500" fill="#2cc64f" /><path d="M12 11l2-.5 1.500 3.500-1.500 1.500q1.500 3 4.500 4.500l1.500-1.500 3 1.500q0 3-3 3-8-1-10-9 .3-2 2-3z" fill="#fff" /></g> },
  { dot: 1, icon: <g><circle cx="16.500" cy="16" r="13" fill="#fbc116" /><path d="M16.500 16L5 9.500a13 13 0 0 1 23 0z" fill="#e33b2e" /><path d="M16.500 16L5 9.500a13 13 0 0 0 9.500 19.500l5-9z" fill="#299c4b" /><circle cx="16.500" cy="16" r="6.200" fill="#fff" /><circle cx="16.500" cy="16" r="5" fill="#2f7df0" /><circle cx="26" cy="6" r="8" fill="#4d4038" /><circle cx="26.500" cy="5" r="4" fill="#95877b" /><path d="M20 8q5-4 11 1" stroke="#222" strokeWidth="2" /></g> },
  { dot: 1, icon: <g><path d="M13 3h7l1 4 4 2 3-2 2 6-2 3 2 3-3 6-4-1-3 1-1 4h-6l-2-4-3-1-4 1-2-6 2-3-2-4 3-5 4 1 3-1z" fill="#7a828c" /><circle cx="16.500" cy="16" r="7" fill="#e8eef5" /><circle cx="16.500" cy="16" r="5.200" fill="#0f61b5" /></g> },
  { open: 1, icon: <g><path d="M3.500 6.500h26v19h-26z" fill="#f5f5f5" /><path d="M3.500 6h26v2.500h-26z" fill="#ddd" /><path d="M10 10h13v14.500H10z" fill="#0f7bd6" /><path d="M5.500 11h3M5.500 14h3M5.500 17h3M5.500 20h3M24.500 11h3M24.500 14h3" stroke="#999" /></g> },
  { dot: 1, icon: <g><path d="M9.500 3.500h20v7h-20z" fill="#41a5ee" /><path d="M9.500 10h20v6h-20z" fill="#2b7cd3" /><path d="M9.500 16h20v6h-20z" fill="#185abd" /><path d="M9.500 22h20v6.500h-20z" fill="#103f91" /><path d="M3.500 9.500h13v13h-13z" fill="#185abd" /><path d="M5.500 12.500l2 7.500 2.500-7 2.500 7 2-7.500" stroke="#fff" strokeWidth="1.700" /></g> },
];
const taskFont = { fontFamily: UI, fontSize: 13, textAnchor: "middle" };
const Taskbar = () => (
  <TaskbarRoot>
    <Icon ml={20} w={30} h={42}>
      <circle cx="22" cy="20" r="7" fill="#ef7d2e" />
      <path d="M6 34q-5-1-5-6 0-5 5-6 2-7 9-6 6 1 7 6 6 1 6 6 0 5-5 6z" fill="#a9c6f3" />
      <path d="M6 34q-4-1-5-5 8 3 27 0-1 4-5 5z" fill="#d5e4fb" />
      <circle cx="22" cy="9.500" r="9" fill="#ff99a4" />
      <text x="22" y="14" fill="#222" {...taskFont}>1</text>
    </Icon>
    <Stack $ml={6.5}>
      <Fit w={25.5} size={13} color="#fff">80°F</Fit>
      <Fit w={83.5} size={13} color="#cfcfcf">Mostly cloudy</Fit>
    </Stack>
    <Icon ml={213} w={25}>
      <path d="M0 0h12v12.500H0zM13 0h12v12.500H13z" fill="#5bd2fb" />
      <path d="M0 13.500h12V26H0zM13 13.500h12V26H13z" fill="#20a6f8" />
    </Icon>
    <SearchPill>
      <Icon ml={11} w={18} h={18}>
        <circle cx="8" cy="7.500" r="6" stroke="#e4e4e4" strokeWidth="1.800" /><path d="M12.500 12l4 4.500" stroke="#e4e4e4" strokeWidth="2" />
      </Icon>
      <Fit ml={11} w={45} size={14} color="#cdcdcd">Search</Fit>
      <Icon ml={103} w={48} h={28}>
        <path d="M6 12Q13 6 26 8q7-1 9-6.500 2 5 0 8.500 10 3 11 9l-3 8-7-2 4-4q-6-3-13-2-8 6-19 6-5-6-2-13z" fill="#4aa7b9" />
        <path d="M14 9q8-2 13 1 6 2 9 5-8-1-14 1-6-4-8-7z" fill="#a3c274" />
        <path d="M7 13q8-3 15 1l-1 6q-5 5-12 5-3-5-2-12z" fill="#d7d36a" />
        <path d="M8 14q7-2 12 1l-1 4-9 3z" fill="#48565c" />
        <path d="M9.500 14v7M12.500 14v8M15.500 14v7M18 15v5" stroke="#f4f4f4" strokeWidth="1.500" />
        <circle cx="3" cy="11" r="1.500" fill="#7fd4ee" /><circle cx="2.500" cy="17" r="2" fill="#7fd4ee" /><circle cx="5.500" cy="7.500" r="1" fill="#7fd4ee" />
        <circle cx="17" cy="10.500" r="1.200" fill="#123" />
      </Icon>
    </SearchPill>
    <TaskApps>
      {apps.map((a, i) => (
        <AppSlot key={i}>
          <AppTile $open={a.open}>
            <svg width="33" height="32" viewBox="0 0 33 32" fill="none" overflow="visible">
              {a.icon}
              {a.badge && <g><circle cx="27" cy="6" r="9" fill="#4cc2ff" /><text x="27" y="10.500" fill="#111" {...taskFont}>{a.badge}</text></g>}
            </svg>
            {(a.dot || a.open) && <Dot $open={a.open} />}
          </AppTile>
        </AppSlot>
      ))}
    </TaskApps>
    <Icon ml={56} w={20} h={20}>
      <path d="M4 14Q0 13 1 10q1-3 4-3 3-6 9-3 3 2 3 5z" fill="#9c9c9c" /><path d="M2 14q4-6 9-4v4z" fill="#f5f5f5" />
      <circle cx="13.500" cy="12.500" r="5.200" fill="#1d79d0" stroke="#dfe9f3" />
      <path d="M10.500 12q3-4 5.500-1M16.500 13q-3 4-5.500 1" stroke="#fff" strokeWidth="1.300" />
    </Icon>
    <Stack $ml={19} $align="center">
      <Fit w={25} size={12.5}>ENG</Fit>
      <Fit w={13} size={12.5}>IN</Fit>
    </Stack>
    <Icon ml={20} w={20} h={18}>
      <path d="M1.500 7q8.500-7.500 17 0M4.500 10q5.500-5 11 0M7 13q3-3 6 0" stroke="#fff" strokeWidth="1.500" /><circle cx="10" cy="15" r="1.600" fill="#fff" />
    </Icon>
    <Icon ml={7} w={18} h={18}>
      <path d="M1 7h3l4.500-4.500v13L4 11.500H1zM12 7l5 5M17 7l-5 5" stroke="#fff" strokeWidth="1.300" />
    </Icon>
    <Icon ml={9} w={18} h={18}>
      <path d="M9 5.500h6.500v8.500H4v-3M16.500 8v3" stroke="#fff" strokeWidth="1.500" />
      <path d="M6 1l-4 7h3l-2 5 6-7H6z" fill="#fff" />
    </Icon>
    <Spacer />
    <Stack $ml={0} $align="flex-end">
      <Fit w={47.5} size={13}>2:24 PM</Fit>
      <Fit w={61.5} size={13}>11/3/2023</Fit>
    </Stack>
    <Icon ml={8} w={18} h={18}>
      <circle cx="9" cy="9" r="9" fill="#4cc2ff" /><text x="9" y="13.500" fill="#133" {...taskFont}>2</text>
    </Icon>
    <Slot $w={22} />
  </TaskbarRoot>
);

/* ---------- a whole modeller window ---------- */
const ModellerWindow = ({ toolNames, active, diagram, bird, birdTop, birdH, boxed, status }) => (
  <Window>
    <TitleBar />
    <MenuBar />
    <Rule />
    <MainToolbar />
    <DiagramTools names={toolNames} />
    <Body>
      <Docks />
      <Center>
        <Tabs active={active} />
        <CanvasFrame>{diagram}</CanvasFrame>
      </Center>
      <BirdDock>
        <DockTitle $h={22} $pad="0 3px 0 0">
          <Fit w={52}><u>B</u>ird's eye</Fit>
          <Spacer />
          <DockIcons />
        </DockTitle>
        <BirdBox $top={birdTop}>
          <BirdView $h={birdH} $boxed={boxed}>{bird}</BirdView>
        </BirdBox>
      </BirdDock>
    </Body>
    <StatusBar {...status} />
    <Taskbar />
  </Window>
);

const shared = ["select", "xyz", "anchor", "note", "rect", "initial", "abc", "final"];
const activityTools = [...shared, "cross", "decision", "bar", "up", "zigzag", "xyz", "pentagon", "receive", "hourglass", "region", "pin", "object"];
const stateTools = [...shared, "up", "deep", "history", "join", "fork", "junction", "choice"];

export default function App() {
  return (
    <Page>
      <GlobalStyle />
      <Section>
        <Heading>
          <Fit w={50} size={40}>31.</Fit>
          <Fit ml={11} w={679} size={40}>Agriculture Loan Management System.</Fit>
        </Heading>
        <ModellerWindow
          toolNames={activityTools}
          active={2}
          diagram={<LoanDiagram />}
          bird={<LoanMini />}
          birdTop={235}
          birdH={149}
          status={{ message: "31.Agriculture Loan Management System.", mw: 249, tw: 245, px: 1148, zoom: "113%", at: 20 }}
        />
      </Section>
      <Section>
        <Heading>
          <Fit w={50} size={40}>32.</Fit>
          <Fit ml={11} w={574} size={40}>Jewel Loan Management System.</Fit>
        </Heading>
        <ModellerWindow
          toolNames={stateTools}
          active={3}
          diagram={<JewelDiagram />}
          bird={<JewelMini />}
          birdTop={286}
          birdH={48}
          boxed
          status={{ message: "32.Jewel Loan Management System", mw: 212, tw: 208, px: 1129, zoom: "163%", at: 32 }}
        />
      </Section>
    </Page>
  );
}
